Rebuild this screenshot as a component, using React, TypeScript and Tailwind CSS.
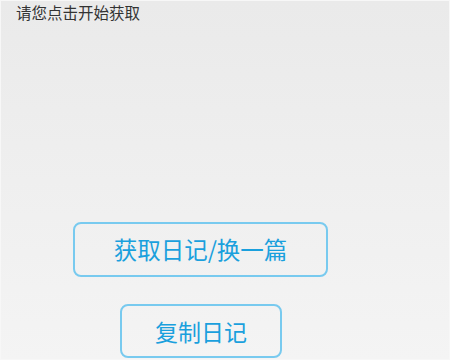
export default function App() {
  return (
    <div
      className="h-[360px] w-[450px] overflow-hidden border border-[#f7f7f7] bg-gradient-to-b from-[#eaeaea] to-[#f4f4f4]"
      style={{ fontFamily: '"Noto Sans CJK SC", "Noto Sans", sans-serif' }}
    >
      <p className="ml-[15px] mt-[1px] text-[15.5px] leading-[20px] text-[#333333]">请您点击开始获取</p>
      <div className="mt-[200px] flex flex-col">
        <button className="ml-[72px] flex h-[55px] w-[255px] items-center justify-center rounded-[8px] border-2 border-[#78caef] text-[23.5px] text-[#1aa0dd]">
          获取日记/换一篇
        </button>
        <button className="ml-[119px] mt-[27px] flex h-[54px] w-[162px] items-center justify-center rounded-[8px] border-2 border-[#78caef] text-[23px] text-[#1aa0dd]">
          复制日记
        </button>
      </div>
    </div>
  );
}
